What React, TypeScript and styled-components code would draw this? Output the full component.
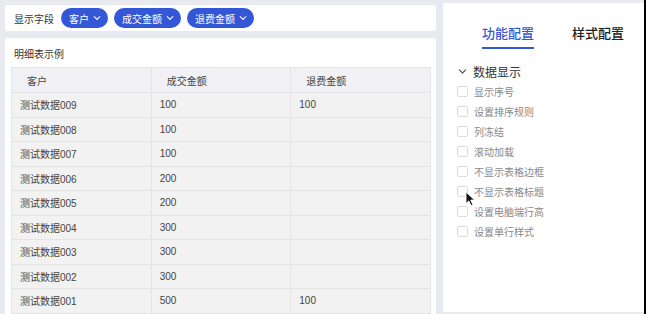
import React from "react";
import styled, { createGlobalStyle } from "styled-components";

const FIELDS = ["客户", "成交金额", "退费金额"];

const ROWS = [
  { name: "测试数据009", deal: "100", refund: "100" },
  { name: "测试数据008", deal: "100", refund: "" },
  { name: "测试数据007", deal: "100", refund: "" },
  { name: "测试数据006", deal: "200", refund: "" },
  { name: "测试数据005", deal: "200", refund: "" },
  { name: "测试数据004", deal: "300", refund: "" },
  { name: "测试数据003", deal: "300", refund: "" },
  { name: "测试数据002", deal: "300", refund: "" },
  { name: "测试数据001", deal: "500", refund: "100" },
];

const OPTIONS = [
  "显示序号",
  "设置排序规则",
  "列冻结",
  "滚动加载",
  "不显示表格边框",
  "不显示表格标题",
  "设置电脑端行高",
  "设置单行样式",
];

const Chevron: React.FC<{ color?: string; size?: number }> = ({ color = "#fff", size = 8 }) => (
  <svg width={size} height={size} viewBox="0 0 10 10" fill="none">
    <path d="M1.5 3.2 L5 6.7 L8.5 3.2" stroke={color} strokeWidth="1.3" strokeLinecap="round" strokeLinejoin="round" />
  </svg>
);

const App: React.FC = () => {
  return (
    <>
      <GlobalStyle />
      <Page>
        <Main>
          <Toolbar>
            <ToolbarLabel>显示字段</ToolbarLabel>
            {FIELDS.map((f) => (
              <Chip key={f}>
                {f}
                <Chevron />
              </Chip>
            ))}
          </Toolbar>
          <TableCard>
            <CardTitle>明细表示例</CardTitle>
            <Table>
              <thead>
                <tr>
                  <Th>客户</Th>
                  <Th>成交金额</Th>
                  <Th>退费金额</Th>
                </tr>
              </thead>
              <tbody>
                {ROWS.map((r) => (
                  <tr key={r.name}>
                    <Td>{r.name}</Td>
                    <Td>{r.deal}</Td>
                    <Td>{r.refund}</Td>
                  </tr>
                ))}
              </tbody>
            </Table>
          </TableCard>
        </Main>
        <Panel>
          <Tabs>
            <Tab $active>功能配置</Tab>
            <Tab>样式配置</Tab>
          </Tabs>
          <SectionHead>
            <Chevron color="#555" size={9} />
            <span>数据显示</span>
          </SectionHead>
          <OptionList>
            {OPTIONS.map((o) => (
              <Option key={o}>
                <Box />
                <span>{o}</span>
              </Option>
            ))}
          </OptionList>
          <Cursor width="12" height="16" viewBox="0 0 12 16">
            <path d="M1 1 L1 12.5 L3.8 9.9 L6 14.6 L7.9 13.7 L5.7 9.1 L9.6 9.1 Z" fill="#111" stroke="#fff" strokeWidth="0.9" strokeLinejoin="round" />
          </Cursor>
        </Panel>
        <Edge />
      </Page>
    </>
  );
};

export default App;

const GlobalStyle = createGlobalStyle`
  html, body {
    margin: 0;
    padding: 0;
    background: #e9e9f0;
  }
  body {
    font-family: "Liberation Sans", "Noto Sans CJK SC", sans-serif;
  }
  * {
    box-sizing: border-box;
  }
`;

const Page = styled.div`
  display: flex;
  width: 646px;
  height: 314px;
  overflow: hidden;
  background: #e9e9f0;
`;

const Main = styled.div`
  width: 443px;
  padding: 5px 7px 0 5px;
  display: flex;
  flex-direction: column;
  gap: 7px;
`;

const Toolbar = styled.div`
  height: 26px;
  background: #fff;
  border-radius: 3px;
  display: flex;
  align-items: center;
  gap: 6px;
  padding-left: 9px;
`;

const ToolbarLabel = styled.span`
  font-size: 10px;
  color: #333;
  margin-right: 1px;
`;

const Chip = styled.span`
  height: 20px;
  border-radius: 10px;
  background: #3357d6;
  color: #fff;
  font-size: 10px;
  display: inline-flex;
  align-items: center;
  gap: 4px;
  padding: 0 7px 0 8px;
`;

const TableCard = styled.div`
  flex: 1;
  background: #fff;
  border-radius: 3px 3px 0 0;
  padding: 0 5px 0 6px;
  display: flex;
  flex-direction: column;
`;

const CardTitle = styled.div`
  height: 29px;
  display: flex;
  align-items: center;
  padding-left: 3px;
  padding-top: 2px;
  font-size: 10px;
  color: #333;
`;

const Table = styled.table`
  width: 420px;
  border-collapse: collapse;
  table-layout: fixed;
  font-size: 10px;
`;

const Th = styled.th`
  height: 25px;
  background: #f1f1f5;
  border: 1px solid #e3e3e8;
  text-align: left;
  font-weight: normal;
  color: #444;
  padding: 0 0 0 15px;
`;

const Td = styled.td`
  height: 24.5px;
  background: #f2f2f2;
  border: 1px solid #e4e4e4;
  color: #444;
  padding: 0 0 0 8px;
`;

const Panel = styled.div`
  position: relative;
  width: 201px;
  height: 309px;
  margin-top: 3px;
  background: #fff;
  display: flex;
  flex-direction: column;
`;

const Tabs = styled.div`
  display: flex;
  gap: 38px;
  padding: 20px 0 0 39px;
`;

const Tab = styled.div<{ $active?: boolean }>`
  font-size: 13px;
  font-weight: 500;
  color: ${(p) => (p.$active ? "#3558d8" : "#222")};
  padding-bottom: 5px;
  border-bottom: 2px solid ${(p) => (p.$active ? "#3558d8" : "transparent")};
`;

const SectionHead = styled.div`
  display: flex;
  align-items: center;
  gap: 6px;
  margin: 14px 0 0 15px;
  font-size: 12px;
  color: #333;
`;

const OptionList = styled.div`
  display: flex;
  flex-direction: column;
  margin: 1px 0 0 14px;
`;

const Option = styled.div`
  height: 20px;
  display: flex;
  align-items: center;
  gap: 6px;
  font-size: 10px;
  color: #888;
`;

const Box = styled.span`
  width: 11px;
  height: 11px;
  border: 1px solid #dcdcdc;
  border-radius: 2px;
  background: #fff;
`;

const Cursor = styled.svg`
  position: absolute;
  left: 22px;
  top: 188px;
`;

const Edge = styled.div`
  width: 2px;
  background: #000;
`;
